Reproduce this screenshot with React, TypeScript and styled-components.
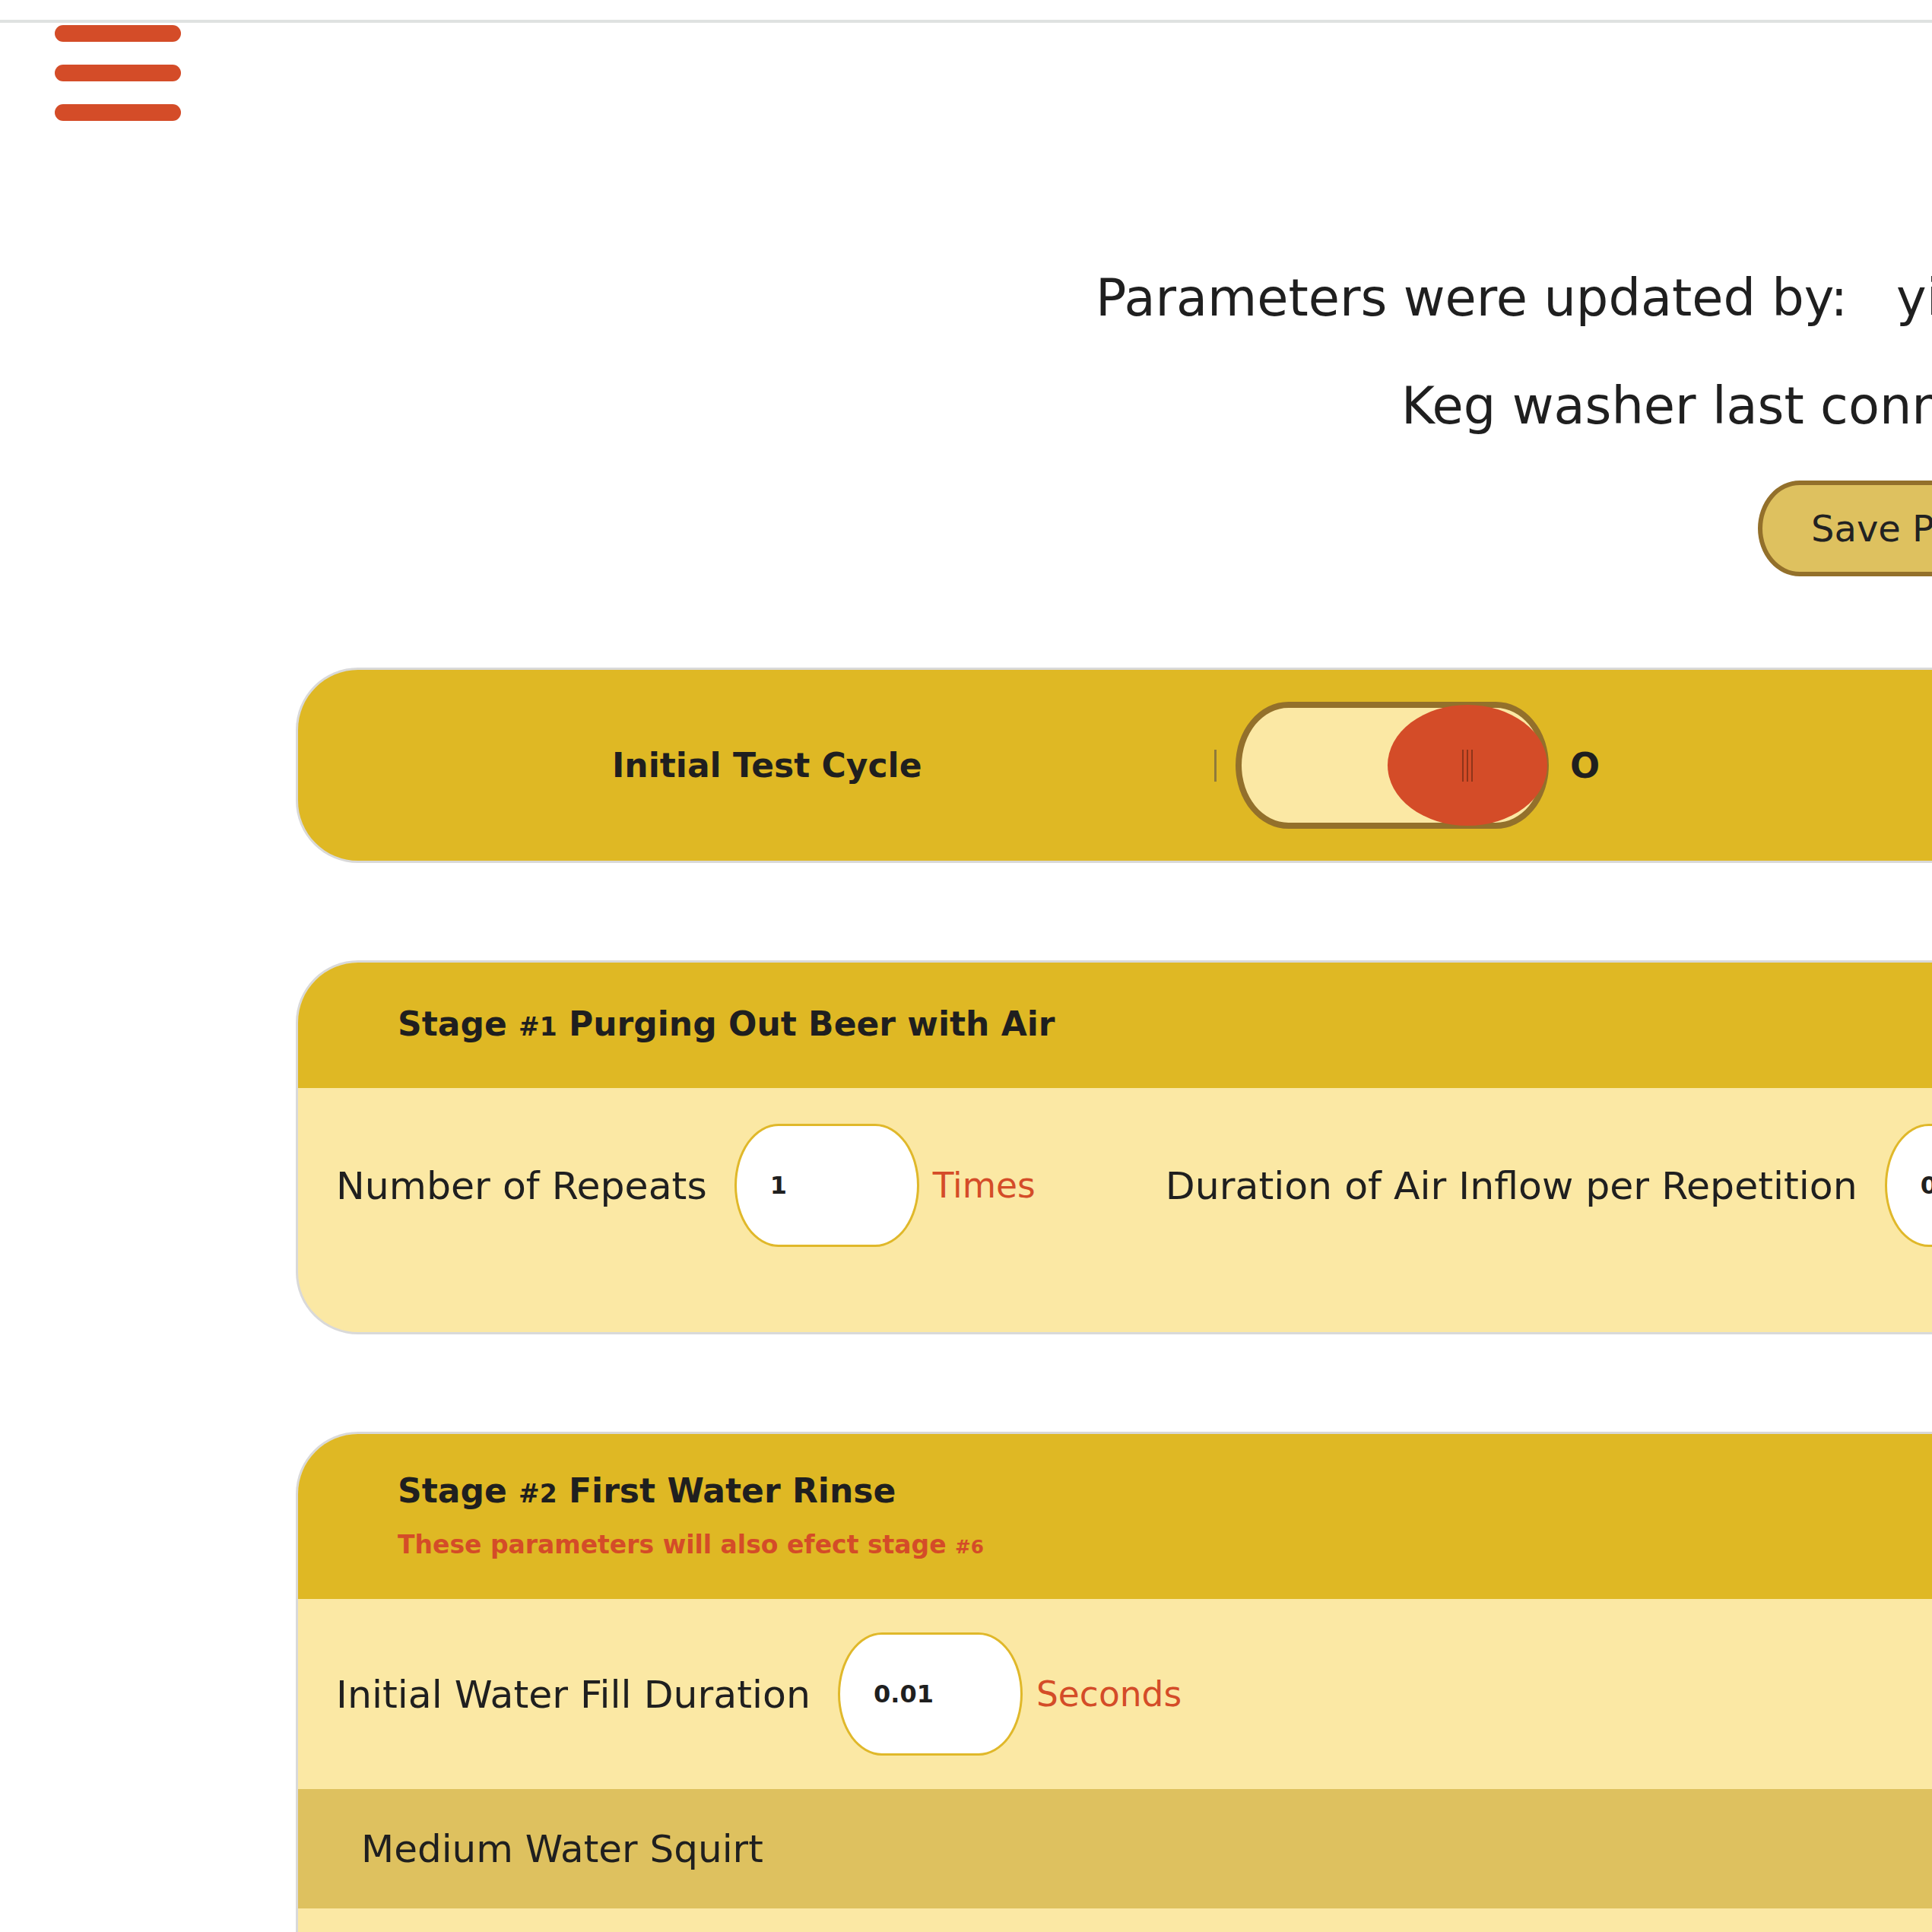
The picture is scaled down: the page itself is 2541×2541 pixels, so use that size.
import React from "react";
import styled, { createGlobalStyle } from "styled-components";

const GlobalStyle = createGlobalStyle`
  html, body { margin: 0; padding: 0; background: #ffffff; }
  body {
    width: 2541px;
    height: 2541px;
    overflow: hidden;
    font-family: "DejaVu Sans", "Liberation Sans", sans-serif;
    color: #222222;
  }
`;

const Page = styled.div`
  width: 2541px;
  height: 2541px;
  overflow: hidden;
  display: flex;
  flex-direction: column;
`;

const TopRule = styled.div`
  flex: none;
  height: 4px;
  margin-top: 26px;
  background: #dfe2e1;
`;

const MenuButton = styled.button`
  flex: none;
  display: flex;
  flex-direction: column;
  gap: 30px;
  width: 166px;
  margin: 3px 0 0 72px;
  padding: 0;
  border: 0;
  background: none;
  cursor: pointer;
`;

const MenuBar = styled.span`
  display: block;
  height: 22px;
  border-radius: 11px;
  background: #d44c28;
`;

const InfoBlock = styled.div`
  flex: none;
  margin-top: 162px;
  display: flex;
  flex-direction: column;
`;

const InfoLine = styled.div<{ $offset: number }>`
  margin-left: ${(p) => p.$offset}px;
  font-size: 67px;
  line-height: 142px;
  white-space: nowrap;
  color: #1f1f1f;
`;

const SaveButton = styled.button`
  flex: none;
  align-self: flex-start;
  margin: 27px 0 0 2312px;
  height: 126px;
  box-sizing: border-box;
  padding: 0 60px 0 64px;
  border: 6px solid #93702b;
  border-radius: 55px / 63px;
  background: #dec15f;
  font-family: "DejaVu Sans", "Liberation Sans", sans-serif;
  font-size: 48px;
  color: #222222;
  white-space: nowrap;
`;

const Panels = styled.div`
  flex: none;
  margin: 120px 0 0 389px;
  width: 2300px;
  display: flex;
  flex-direction: column;
  gap: 128px;
`;

const Panel = styled.section`
  box-sizing: border-box;
  border: 3px solid #d9d9d9;
  border-right: 0;
  border-radius: 82px 0 0 82px;
  overflow: hidden;
  background: #fbe8a4;
`;

const CyclePanel = styled(Panel)`
  height: 257px;
  background: #dfb824;
  display: flex;
  align-items: center;
`;

const CycleLabel = styled.div`
  flex: 0 0 1205px;
  box-sizing: border-box;
  padding-left: 413px;
  font-size: 44px;
  font-weight: 700;
  white-space: nowrap;
  color: #1f1f1f;
`;

const SwitchGroup = styled.div`
  display: flex;
  align-items: center;
`;

const OnMark = styled.span`
  display: block;
  width: 3px;
  height: 42px;
  background: #8f7a3a;
  margin-right: 25px;
`;

const OffMark = styled.span`
  margin-left: 28px;
  font-size: 46px;
  font-weight: 700;
  color: #1f1f1f;
`;

const Switch = styled.div`
  position: relative;
  width: 412px;
  height: 167px;
  box-sizing: border-box;
  border: 8px solid #93702b;
  border-radius: 70px / 84px;
  background: #fbe8a4;
`;

const Knob = styled.span`
  position: absolute;
  top: -4px;
  right: -6px;
  width: 210px;
  height: 159px;
  border-radius: 50%;
  background: #d44c28;
  display: flex;
  align-items: center;
  justify-content: center;
  gap: 4px;
`;

const KnobLine = styled.span`
  display: block;
  width: 2px;
  height: 42px;
  background: #8e3419;
`;

const StageHeader = styled.header<{ $height: number }>`
  height: ${(p) => p.$height}px;
  box-sizing: border-box;
  background: #dfb824;
  display: flex;
  flex-direction: column;
  justify-content: center;
  padding-left: 131px;
`;

const StageTitle = styled.h2`
  margin: 0;
  font-size: 44px;
  line-height: 52px;
  font-weight: 700;
  white-space: nowrap;
  color: #1f1f1f;
`;

const Small = styled.span`
  font-size: 0.75em;
`;

const StageNote = styled.p`
  margin: 21px 0 0 0;
  font-size: 33px;
  line-height: 40px;
  font-weight: 700;
  color: #d44c28;
  white-space: nowrap;
`;

const FieldRow = styled.div<{ $pt: number; $pb: number }>`
  display: flex;
  align-items: center;
  padding: ${(p) => p.$pt}px 0 ${(p) => p.$pb}px 50px;
  white-space: nowrap;
`;

const Field = styled.div<{ $spaceAfter?: number }>`
  display: flex;
  align-items: center;
  margin-right: ${(p) => p.$spaceAfter ?? 0}px;
  flex: none;
`;

const Label = styled.span`
  font-size: 50.5px;
  color: #1f1f1f;
`;

const ValueInput = styled.input`
  width: 243px;
  height: 162px;
  box-sizing: border-box;
  margin: 0 18px 0 36px;
  padding: 0 0 0 44px;
  border: 3px solid #e0b82a;
  border-radius: 58px / 81px;
  background: #ffffff;
  font-family: "DejaVu Sans", "Liberation Sans", sans-serif;
  font-size: 32px;
  font-weight: 700;
  color: #1f1f1f;
  outline: none;
`;

const Unit = styled.span`
  font-size: 45.5px;
  color: #d44c28;
`;

const SubBar = styled.div`
  height: 157px;
  box-sizing: border-box;
  background: #dec15f;
  display: flex;
  align-items: center;
  padding-left: 83px;
  font-size: 50px;
  color: #1f1f1f;
`;

const Filler = styled.div`
  height: 200px;
`;

export default function App() {
  return (
    <>
      <GlobalStyle />
      <Page>
        <TopRule />
        <MenuButton aria-label="menu">
          <MenuBar />
          <MenuBar />
          <MenuBar />
        </MenuButton>
        <InfoBlock>
          <InfoLine $offset={1441}>Parameters were updated by:{"\u00a0\u00a0\u00a0"}yishai</InfoLine>
          <InfoLine $offset={1843}>Keg washer last connected: 12/03/2023</InfoLine>
        </InfoBlock>
        <SaveButton>Save Parameters</SaveButton>
        <Panels>
          <CyclePanel>
            <CycleLabel>Initial Test Cycle</CycleLabel>
            <SwitchGroup>
              <OnMark />
              <Switch>
                <Knob>
                  <KnobLine />
                  <KnobLine />
                  <KnobLine />
                </Knob>
              </Switch>
              <OffMark>O</OffMark>
            </SwitchGroup>
          </CyclePanel>

          <Panel>
            <StageHeader $height={165}>
              <StageTitle>
                Stage <Small>#1</Small> Purging Out Beer with Air
              </StageTitle>
            </StageHeader>
            <FieldRow $pt={47} $pb={112}>
              <Field $spaceAfter={171}>
                <Label>Number of Repeats</Label>
                <ValueInput readOnly value="1" />
                <Unit>Times</Unit>
              </Field>
              <Field>
                <Label>Duration of Air Inflow per Repetition</Label>
                <ValueInput readOnly value="0.5" />
                <Unit>Seconds</Unit>
              </Field>
            </FieldRow>
          </Panel>

          <Panel>
            <StageHeader $height={217}>
              <StageTitle>
                Stage <Small>#2</Small> First Water Rinse
              </StageTitle>
              <StageNote>
                These parameters will also efect stage <Small>#6</Small>
              </StageNote>
            </StageHeader>
            <FieldRow $pt={44} $pb={44}>
              <Field>
                <Label>Initial Water Fill Duration</Label>
                <ValueInput readOnly value="0.01" />
                <Unit>Seconds</Unit>
              </Field>
            </FieldRow>
            <SubBar>Medium Water Squirt</SubBar>
            <Filler />
          </Panel>
        </Panels>
      </Page>
    </>
  );
}
